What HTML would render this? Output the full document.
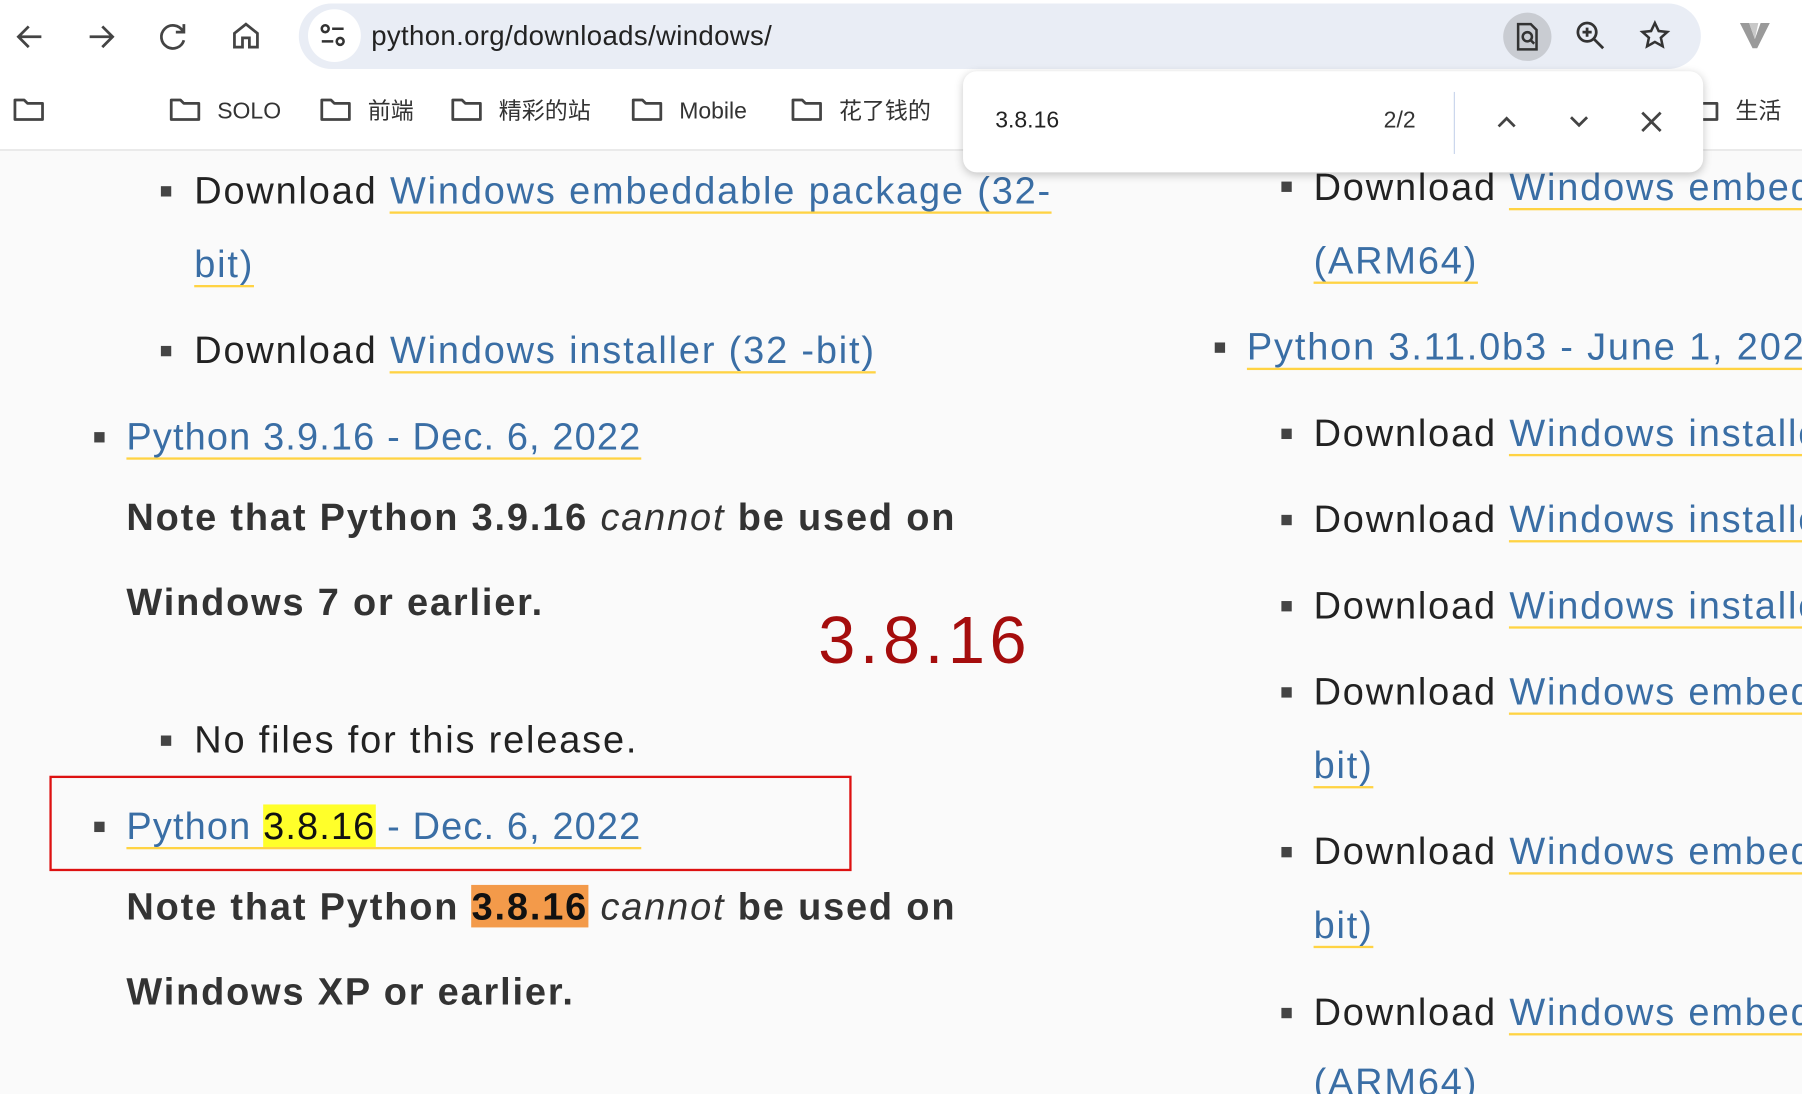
<!DOCTYPE html>
<html><head><meta charset="utf-8"><style>
html,body{margin:0;padding:0;width:1802px;height:1094px;overflow:hidden;background:#fafafa}
#w{position:absolute;left:0;top:0;width:1568px;height:952px;overflow:hidden;transform:scale(1.14923);transform-origin:0 0;font-family:"Liberation Sans","Noto Sans CJK SC",sans-serif}
.hdr{position:absolute;left:0;top:0;width:1568px;height:130px;background:#fff;border-bottom:1px solid #ddd}
.addr{position:absolute;left:260px;top:3px;width:1220px;height:57px;background:#e9edf5;border-radius:29px}
.t{position:absolute;white-space:nowrap;color:#222;font-size:33px;line-height:40px;letter-spacing:1.6px}
.a{color:#3a6ea5;border-bottom:2px solid #ffd343}
.b{font-weight:bold;color:#333}
.sq{position:absolute;width:9px;height:9px;background:#444}
.bm{position:absolute;top:84px;font-size:20px;color:#333;line-height:24px;white-space:nowrap}
.fd{display:inline-block;width:28px;height:22px;vertical-align:-3px;margin-right:14px}
.ic{position:absolute}
.rc{position:absolute;left:1040px;top:131px;width:528px;height:821px;overflow:hidden}
</style></head><body><div id="w">
<svg width="0" height="0" style="position:absolute"><defs><symbol id="fo" viewBox="0 0 28 22"><path d="M2 3h8l3 3h13v14H2z" fill="none" stroke="#444" stroke-width="2.4" stroke-linejoin="round"/></symbol></defs></svg>
<div class="hdr">
<svg class="ic" style="left:12px;top:18px" width="28" height="28" viewBox="0 0 28 28" fill="none" stroke="#444" stroke-width="2.4"><path d="M24 14H5M13 5l-9 9 9 9"/></svg>
<svg class="ic" style="left:74px;top:18px" width="28" height="28" viewBox="0 0 28 28" fill="none" stroke="#444" stroke-width="2.4"><path d="M4 14h19M15 5l9 9-9 9"/></svg>
<svg class="ic" style="left:137px;top:18px" width="28" height="28" viewBox="0 0 28 28" fill="none" stroke="#444" stroke-width="2.4"><path d="M22 9a10 10 0 1 0 1 8"/><path d="M23 3v7h-7"/></svg>
<svg class="ic" style="left:200px;top:17px" width="28" height="28" viewBox="0 0 28 28" fill="none" stroke="#444" stroke-width="2.4"><path d="M4 12L14 4l10 8v12H17v-8h-6v8H4z"/></svg>
<div class="addr">
<div style="position:absolute;left:8px;top:5px;width:46px;height:46px;border-radius:50%;background:#fff"></div>
<svg class="ic" style="left:17px;top:16px" width="26" height="26" viewBox="0 0 26 26" fill="none" stroke="#333" stroke-width="2.2"><circle cx="6" cy="6" r="3"/><path d="M12 6h10M3 17h10"/><circle cx="19" cy="17" r="3"/></svg>
<div style="position:absolute;left:63px;top:15px;font-size:24px;color:#222;letter-spacing:.3px">python.org/downloads/windows/</div>
<div style="position:absolute;left:1048px;top:8px;width:42px;height:42px;border-radius:50%;background:#c9ccd2"></div>
<svg class="ic" style="left:1057px;top:16px" width="24" height="26" viewBox="0 0 24 26" fill="none" stroke="#333" stroke-width="2.2"><path d="M4 2h11l5 5v17H4z"/><circle cx="12" cy="13" r="4"/><path d="M15 16l3 3"/></svg>
<svg class="ic" style="left:1110px;top:14px" width="28" height="28" viewBox="0 0 28 28" fill="none" stroke="#333" stroke-width="2.4"><circle cx="11" cy="11" r="8"/><path d="M17 17l8 8M11 7v8M7 11h8"/></svg>
<svg class="ic" style="left:1166px;top:14px" width="28" height="28" viewBox="0 0 28 28" fill="none" stroke="#333" stroke-width="2.2"><path d="M14 3l3.3 7 7.5.8-5.6 5 1.6 7.5L14 19.5 7.2 23.3l1.6-7.5-5.6-5 7.5-.8z"/></svg>
</div>
<svg class="ic" style="left:1512px;top:18px" width="30" height="26" viewBox="0 0 30 26"><path d="M2 2h8l5 14 5-14h8L17 24h-4z" fill="#9a9a9a"/><path d="M10 2h8l-3 14z" fill="#c8c8c8"/></svg>
<div class="bm" style="left:11px"><svg class="fd"><use href="#fo"/></svg></div>
<div class="bm" style="left:147px"><svg class="fd"><use href="#fo"/></svg>SOLO</div>
<div class="bm" style="left:278px"><svg class="fd"><use href="#fo"/></svg>前端</div>
<div class="bm" style="left:392px"><svg class="fd"><use href="#fo"/></svg>精彩的站</div>
<div class="bm" style="left:549px"><svg class="fd"><use href="#fo"/></svg>Mobile</div>
<div class="bm" style="left:688px"><svg class="fd"><use href="#fo"/></svg>花了钱的</div>
<div class="bm" style="left:1468px"><svg class="fd"><use href="#fo"/></svg>生活</div>
</div>
<!-- left column -->
<div class="sq" style="left:140px;top:162px"></div>
<div class="t" style="left:169px;top:146px">Download <span class="a">Windows embeddable package (32-</span></div>
<div class="t" style="left:169px;top:210px"><span class="a">bit)</span></div>
<div class="sq" style="left:140px;top:301px"></div>
<div class="t" style="left:169px;top:285px">Download <span class="a">Windows installer (32 -bit)</span></div>
<div class="sq" style="left:82px;top:376px"></div>
<div class="t" style="left:110px;top:360px;letter-spacing:1px"><span class="a">Python 3.9.16 - Dec. 6, 2022</span></div>
<div class="t b" style="left:110px;top:430px">Note that Python 3.9.16 <i style="font-weight:normal">cannot</i> be used on</div>
<div class="t b" style="left:110px;top:504px">Windows 7 or earlier.</div>
<div class="t" style="left:712px;top:526px;font-size:58px;line-height:64px;color:#a50d0d;letter-spacing:4px">3.8.16</div>
<div class="sq" style="left:140px;top:640px"></div>
<div class="t" style="left:169px;top:624px">No files for this release.</div>
<div style="position:absolute;left:43px;top:675px;width:698px;height:83px;border:2px solid #d11;box-sizing:border-box"></div>
<div class="sq" style="left:82px;top:715px"></div>
<div class="t" style="left:110px;top:699px;letter-spacing:1px"><span class="a">Python <span style="background:#ffff2a;color:#111">3.8.16</span> - Dec. 6, 2022</span></div>
<div class="t b" style="left:110px;top:769px">Note that Python <span style="background:#f39a4a;color:#111">3.8.16</span> <i style="font-weight:normal">cannot</i> be used on</div>
<div class="t b" style="left:110px;top:843px">Windows XP or earlier.</div>
<!-- right column -->
<div class="rc">
<div class="sq" style="left:75px;top:27px"></div>
<div class="t" style="left:103px;top:12px">Download <span class="a">Windows embeddable</span></div>
<div class="t" style="left:103px;top:76px"><span class="a">(ARM64)</span></div>
<div class="sq" style="left:17px;top:167px"></div>
<div class="t" style="left:45px;top:151px"><span class="a">Python 3.11.0b3 - June 1, 2022</span></div>
<div class="sq" style="left:75px;top:242px"></div>
<div class="t" style="left:103px;top:226px">Download <span class="a">Windows installer</span></div>
<div class="sq" style="left:75px;top:317px"></div>
<div class="t" style="left:103px;top:301px">Download <span class="a">Windows installer</span></div>
<div class="sq" style="left:75px;top:392px"></div>
<div class="t" style="left:103px;top:376px">Download <span class="a">Windows installer</span></div>
<div class="sq" style="left:75px;top:467px"></div>
<div class="t" style="left:103px;top:451px">Download <span class="a">Windows embeddable</span></div>
<div class="t" style="left:103px;top:515px"><span class="a">bit)</span></div>
<div class="sq" style="left:75px;top:606px"></div>
<div class="t" style="left:103px;top:590px">Download <span class="a">Windows embeddable</span></div>
<div class="t" style="left:103px;top:654px"><span class="a">bit)</span></div>
<div class="sq" style="left:75px;top:746px"></div>
<div class="t" style="left:103px;top:730px">Download <span class="a">Windows embeddable</span></div>
<div class="t" style="left:103px;top:791px"><span class="a">(ARM64)</span></div>
</div>
<div style="position:absolute;left:838px;top:62px;width:644px;height:88px;background:#fff;border-radius:12px;box-shadow:0 2px 8px rgba(0,0,0,.22)">
<div style="position:absolute;left:28px;top:32px;font-size:20px;color:#222">3.8.16</div>
<div style="position:absolute;left:366px;top:32px;font-size:20px;color:#333">2/2</div>
<div style="position:absolute;left:427px;top:18px;width:1px;height:54px;background:#c8d4ec"></div>
<svg class="ic" style="left:462px;top:34px" width="22" height="20" viewBox="0 0 22 20" fill="none" stroke="#444" stroke-width="2.4"><path d="M4 14l7-7 7 7"/></svg>
<svg class="ic" style="left:525px;top:34px" width="22" height="20" viewBox="0 0 22 20" fill="none" stroke="#444" stroke-width="2.4"><path d="M4 6l7 7 7-7"/></svg>
<svg class="ic" style="left:588px;top:33px" width="22" height="22" viewBox="0 0 22 22" fill="none" stroke="#444" stroke-width="2.4"><path d="M3 3l16 16M19 3L3 19"/></svg>
</div>
</div></body></html>
